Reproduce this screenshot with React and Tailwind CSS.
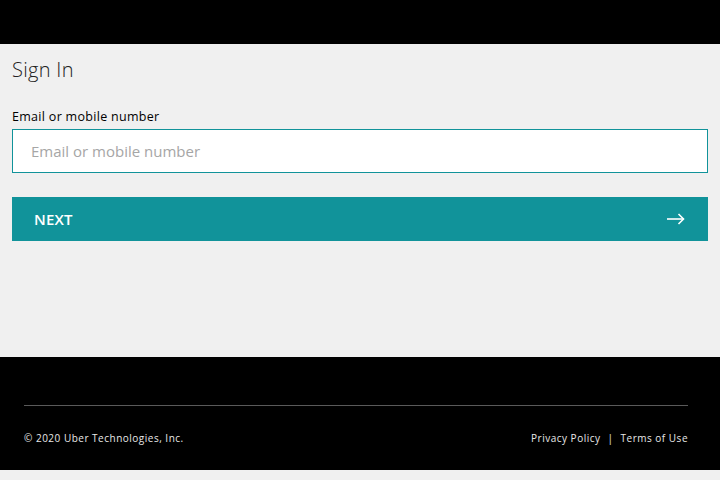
export default function App() {
  return (
    <div className="w-[720px] h-[480px] bg-[#f0f0f0] flex flex-col" style={{ fontFamily: '"Open Sans", "Noto Sans", sans-serif' }}>
      <div className="h-[44px] bg-black shrink-0" />
      <div className="h-[313px] shrink-0 px-3 pt-[12px]">
        <h1 className="text-[20px] leading-[28px] font-light text-[#222] tracking-[0.3px]">Sign In</h1>
        <label className="block mt-[24px] text-[12.5px] leading-[17px] text-black tracking-[0.3px]">Email or mobile number</label>
        <div className="mt-[4px] h-[44px] bg-white border border-[#11939a] flex items-center pl-[18px]">
          <span className="text-[15px] text-[#a6a6a6]">Email or mobile number</span>
        </div>
        <button className="mt-[24px] w-full h-[44px] bg-[#11939a] flex items-center justify-between pl-[22px] pr-[23px]">
          <span className="text-[15px] font-semibold text-white tracking-[0.2px]">NEXT</span>
          <svg width="18" height="12" viewBox="0 0 18 12" fill="none" stroke="white" strokeWidth="1.6">
            <path d="M0 6h16.5" />
            <path d="M11.5 1l5 5-5 5" />
          </svg>
        </button>
      </div>
      <div className="h-[113px] bg-black shrink-0 pl-6 pr-8 pt-[48px]">
        <div className="h-px bg-[#5a5a5a]" />
        <div className="flex justify-between items-center mt-[25px] text-[10px] font-normal text-[#e8e8e8] tracking-[0.5px]">
          <span>© 2020 Uber Technologies, Inc.</span>
          <span>Privacy Policy<span className="mx-[7px]">|</span>Terms of Use</span>
        </div>
      </div>
    </div>
  );
}
